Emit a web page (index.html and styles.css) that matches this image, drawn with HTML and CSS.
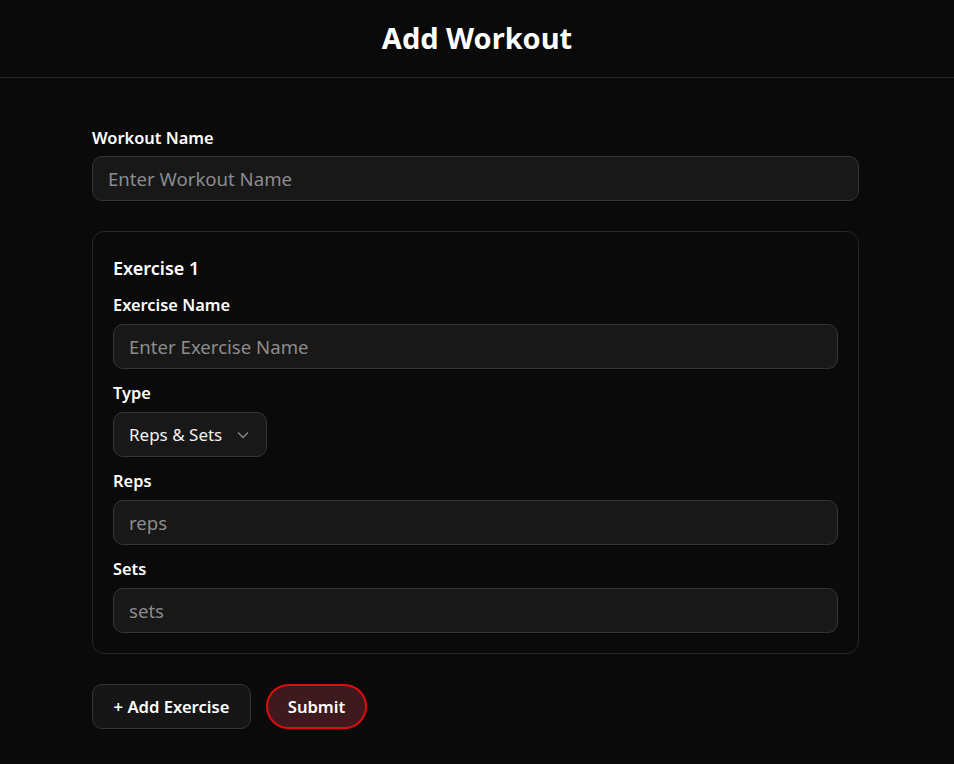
FILE: index.html
```html
<!DOCTYPE html>
<html lang="en">
<head>
<meta charset="utf-8">
<title>Add Workout</title>
<link rel="stylesheet" href="styles.css">
</head>
<body>
<header class="topbar">
  <h1 class="title">Add Workout</h1>
</header>
<main class="page">
  <form class="form">
    <div class="field">
      <label class="label">Workout Name</label>
      <input class="input" type="text" placeholder="Enter Workout Name">
    </div>
    <section class="card">
      <h2 class="card-title">Exercise 1</h2>
      <div class="field">
        <label class="label">Exercise Name</label>
        <input class="input" type="text" placeholder="Enter Exercise Name">
      </div>
      <div class="field">
        <label class="label">Type</label>
        <div class="select">
          <span>Reps &amp; Sets</span>
          <svg class="chev" width="12" height="8" viewBox="0 0 12 8"><path d="M1 1.5 L6 6.5 L11 1.5" fill="none" stroke="#8a8a8a" stroke-width="1.3"/></svg>
        </div>
      </div>
      <div class="field">
        <label class="label">Reps</label>
        <input class="input" type="text" placeholder="reps">
      </div>
      <div class="field">
        <label class="label">Sets</label>
        <input class="input" type="text" placeholder="sets">
      </div>
    </section>
    <div class="actions">
      <button type="button" class="btn btn-add">+ Add Exercise</button>
      <button type="button" class="btn btn-submit">Submit</button>
    </div>
  </form>
</main>
</body>
</html>
```
FILE: styles.css
```css
* { box-sizing: border-box; }
html, body { margin: 0; padding: 0; }
body {
  background: #0a0a0a;
  color: #ffffff;
  font-family: "Noto Sans", "Open Sans", sans-serif;
  min-height: 764px;
}
.topbar {
  height: 78px;
  border-bottom: 1px solid #262626;
  display: flex;
  align-items: center;
  justify-content: center;
}
.title {
  margin: 0;
  font-size: 29px;
  font-weight: 700;
  line-height: 1;
  padding-bottom: 2px;
}
.page {
  padding: 48px 92px 0 92px;
}
.form {
  width: 767px;
  display: flex;
  flex-direction: column;
}
.field {
  display: flex;
  flex-direction: column;
}
.label {
  font-size: 16.4px;
  font-weight: 600;
  line-height: 24px;
  margin-bottom: 6px;
  color: #ffffff;
}
.card .label { margin-bottom: 7px; }
.input {
  height: 45px;
  width: 100%;
  background: #181818;
  border: 1px solid #353535;
  border-radius: 10px;
  padding: 0 15px;
  color: #e5e5e5;
  font-family: inherit;
  font-size: 18.6px;
  outline: none;
}
.input::placeholder { color: #8c8c8c; }
.card {
  margin-top: 30px;
  border: 1px solid #262626;
  border-radius: 12px;
  padding: 24px 20px 20px 20px;
  display: flex;
  flex-direction: column;
  gap: 12px;
}
.card-title {
  margin: 0 0 1px 0;
  font-size: 18px;
  font-weight: 600;
  line-height: 24px;
}
.select {
  width: 154px;
  height: 45px;
  background: #181818;
  border: 1px solid #353535;
  border-radius: 10px;
  padding: 0 17px 0 15px;
  display: flex;
  align-items: center;
  justify-content: space-between;
  font-size: 17px;
  color: #f2f2f2;
}
.actions {
  margin-top: 30px;
  display: flex;
  gap: 15px;
}
.btn {
  height: 45px;
  font-family: inherit;
  font-size: 16.6px;
  font-weight: 600;
  color: #ffffff;
  cursor: pointer;
}
.btn-add {
  width: 159px;
  background: #161616;
  border: 1px solid #353535;
  border-radius: 10px;
}
.btn-submit {
  width: 101px;
  background: #3e1a1e;
  border: 2px solid #e00d0d;
  border-radius: 999px;
}
```
